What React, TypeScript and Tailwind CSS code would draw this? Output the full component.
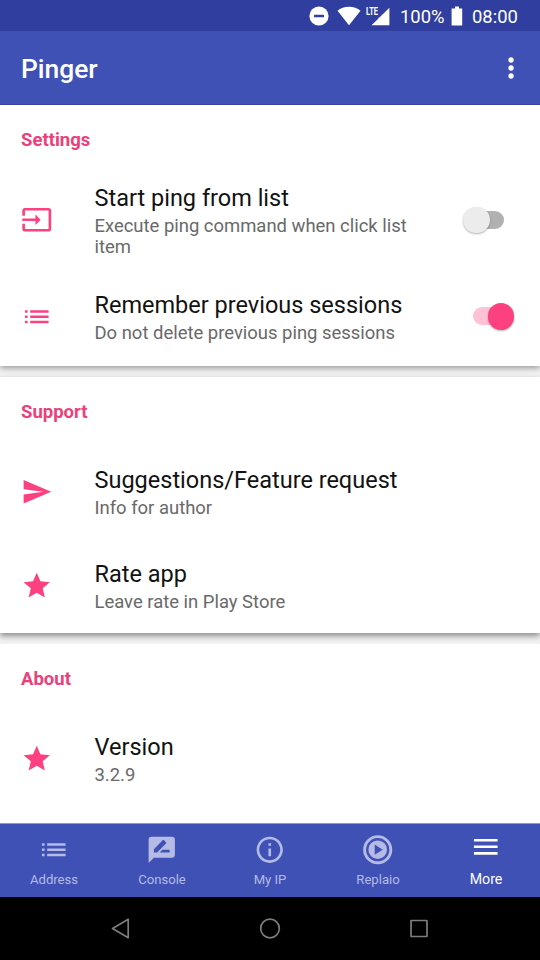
import type { ReactNode } from 'react';

const paths = {
  input:
    'M21 3.01H3c-1.1 0-2 .9-2 2V9h2V4.99h18v14.03H3V15H1v4.01c0 1.1.9 1.98 2 1.98h18c1.1 0 2-.88 2-1.98v-14c0-1.11-.9-2-2-2zM11 16l4-4-4-4v3H1v2h10v3z',
  list: 'M3 13h2v-2H3v2zm0 4h2v-2H3v2zm0-8h2V7H3v2zm4 4h14v-2H7v2zm0 4h14v-2H7v2zM7 7v2h14V7H7z',
  send: 'M2.01 21L23 12 2.01 3 2 10l15 2-15 2z',
  star: 'M12 17.27L18.18 21l-1.64-7.03L22 9.24l-7.19-.61L12 2 9.19 8.63 2 9.24l5.46 4.73L5.82 21z',
  review:
    'M20 2H4c-1.1 0-1.99.9-1.99 2L2 22l4-4h14c1.1 0 2-.9 2-2V4c0-1.1-.9-2-2-2zM6 14v-2.47l6.88-6.88c.2-.2.51-.2.71 0l1.77 1.77c.2.2.2.51 0 .71L8.47 14H6zm12 0h-7.5l2-2H18v2z',
  info: 'M11 7h2v2h-2zm0 4h2v6h-2zm1-9C6.48 2 2 6.48 2 12s4.48 10 10 10 10-4.48 10-10S17.52 2 12 2zm0 18c-4.41 0-8-3.59-8-8s3.59-8 8-8 8 3.59 8 8-3.59 8-8 8z',
  menu: 'M3 18h18v-2H3v2zm0-5h18v-2H3v2zm0-7v2h18V6H3z',
};

function Icon({ d, className = '' }: { d: string; className?: string }) {
  return (
    <svg viewBox="0 0 24 24" fill="currentColor" className={`size-[31.5px] shrink-0 ${className}`}>
      <path d={d} />
    </svg>
  );
}

function ReplaioIcon() {
  return (
    <svg viewBox="0 0 32 32" className="size-8 shrink-0">
      <circle cx="15.7" cy="15.7" r="13.1" fill="none" stroke="currentColor" strokeWidth="2.9" />
      <path
        fill="currentColor"
        fillRule="evenodd"
        d="M15.700 6.400a9.300 9.300 0 1 0 0 18.600a9.300 9.300 0 1 0 0-18.600zM12.700 10.600L20.700 15.700L12.700 20.800z"
      />
    </svg>
  );
}

function Switch({ on }: { on: boolean }) {
  return (
    <div className={`flex h-[18px] w-[37px] items-center rounded-full ${on ? 'mr-[30px] justify-end bg-[#ffc1d6]' : 'mr-9 bg-[#b1b1b1]'}`}>
      <div
        className={`size-[26.5px] shrink-0 rounded-full shadow-[0_1px_2px_rgba(0,0,0,0.3)] ${on ? '-mr-[4px] bg-[#fc4080]' : '-ml-[4px] bg-[#ececec]'}`}
      />
    </div>
  );
}

function Row({ icon, title, sub, height = 'h-[94.5px]', children }: { icon: string; title: string; sub: string; height?: string; children?: ReactNode }) {
  return (
    <div className={`flex items-center pl-[21px] ${height}`}>
      <Icon d={icon} className="text-[#fc4080]" />
      <div className="ml-[42px] w-[330px] pt-0.5">
        <div className="text-[23.5px] leading-7 whitespace-nowrap text-[#121212]">{title}</div>
        <div className="mt-1 text-[18.45px] leading-[21.5px] text-[#696969]">{sub}</div>
      </div>
      <div className="ml-auto">{children}</div>
    </div>
  );
}

function Section({ title, className = '', children }: { title: string; className?: string; children: ReactNode }) {
  return (
    <section className={`bg-white ${className}`}>
      <h2 className="h-[67px] pt-[25px] pl-[21px] text-[18.5px] leading-[21.5px] font-bold text-[#ec407a]">{title}</h2>
      {children}
    </section>
  );
}

function Tab({ label, children }: { label: string; children: ReactNode }) {
  return (
    <div className="flex flex-1 flex-col items-center pt-[10px] text-[#b5bbe4]">
      <div className="flex h-8 items-center">{children}</div>
      <span className="mt-[5px] text-[13.1px] leading-[18px]">{label}</span>
    </div>
  );
}

function StatusBar() {
  return (
    <div className="flex h-[31px] items-center justify-end bg-[#303f9f] pr-5 text-[18.4px] leading-[31px] text-white">
      <svg viewBox="0 0 20 20" className="mr-2 size-5">
        <circle cx="10" cy="10" r="9.6" fill="#fff" />
        <rect x="5" y="8.8" width="10" height="2.4" rx="0.5" fill="#303f9f" />
      </svg>
      <svg viewBox="0 0 24 20" className="mr-[5px] h-5 w-6" fill="#fff">
        <path d="M.5 4.8C3.5 2.3 7.6 .8 12 .8s8.500 1.500 11.500 4L12 19.200z" />
      </svg>
      <div className="relative mr-[10px] h-5 w-6">
        <svg viewBox="0 0 24 20" className="h-5 w-6" fill="#fff">
          <path d="M23.400 1.800V19.300H5.500L12.500 12.400V11.500H13.400L23.400 1.800z" />
        </svg>
        <span className="absolute top-0 left-0 origin-left scale-x-[0.68] text-[11px] leading-[12px] font-bold">LTE</span>
      </div>
      <span className="w-[45px] pt-px whitespace-nowrap">100%</span>
      <svg viewBox="0 0 12 20" className="mr-[9px] ml-1.5 h-5 w-3" fill="#fff">
        <path d="M4 .5h4v2h3.200v17H.6v-17H4z" />
      </svg>
      <span className="w-12 pt-px whitespace-nowrap">08:00</span>
    </div>
  );
}

export default function App() {
  return (
    <div className="flex h-[960px] w-[540px] flex-col overflow-hidden bg-[#f2f2f2] font-[Roboto,sans-serif]">
      <StatusBar />
      <header className="flex h-[74px] shrink-0 items-center justify-between border-b border-[#35439a] bg-[#3f51b5] pr-[26px] pl-[21px] text-white">
        <h1 className="pt-[5px] text-[26.4px] font-medium">Pinger</h1>
        <svg viewBox="0 0 6 22" className="h-[22px] w-1.5" fill="#fff">
          <circle cx="3" cy="3" r="2.7" />
          <circle cx="3" cy="11" r="2.7" />
          <circle cx="3" cy="19" r="2.7" />
        </svg>
      </header>
      <main className="flex h-[718px] shrink-0 flex-col gap-[11px] overflow-hidden">
        <Section title="Settings" className="h-[261px] shrink-0 shadow-[0_2px_6px_rgba(0,0,0,0.38)]">
          <Row icon={paths.input} title="Start ping from list" sub="Execute ping command when click list item" height="h-[96px]">
            <Switch on={false} />
          </Row>
          <Row icon={paths.list} title="Remember previous sessions" sub="Do not delete previous ping sessions" height="h-[96.5px]">
            <Switch on />
          </Row>
        </Section>
        <Section title="Support" className="h-64 shrink-0 shadow-[0_3px_6px_rgba(0,0,0,0.42)]">
          <Row icon={paths.send} title="Suggestions/Feature request" sub="Info for author" />
          <Row icon={paths.star} title="Rate app" sub="Leave rate in Play Store" />
        </Section>
        <Section title="About" className="relative flex-1">
          <Row icon={paths.star} title="Version" sub="3.2.9" />
        </Section>
      </main>
      <nav className="flex h-[74px] shrink-0 border-t border-[#8b95d0] bg-[#3f51b5]">
        <Tab label="Address"><Icon d={paths.list} /></Tab>
        <Tab label="Console"><Icon d={paths.review} /></Tab>
        <Tab label="My IP"><Icon d={paths.info} /></Tab>
        <Tab label="Replaio"><ReplaioIcon /></Tab>
        <div className="flex flex-1 flex-col items-center pt-[7px] text-white">
          <div className="flex h-8 items-center"><Icon d={paths.menu} /></div>
          <span className="mt-[7px] text-[14.2px] leading-[18px]">More</span>
        </div>
      </nav>
      <div className="flex flex-1 items-center justify-between bg-black px-[110px]">
        <svg viewBox="0 0 22 22" className="size-[22px]" fill="none" stroke="#7d7d7d" strokeWidth="1.7" strokeLinejoin="round">
          <path d="M18.200 1.300V19.700L2.500 10.500z" />
        </svg>
        <svg viewBox="0 0 22 22" className="size-[22px]" fill="none" stroke="#7d7d7d" strokeWidth="1.7">
          <circle cx="11" cy="10.5" r="9.3" />
        </svg>
        <svg viewBox="0 0 22 22" className="size-[22px]" fill="none" stroke="#7d7d7d" strokeWidth="1.7" strokeLinejoin="round">
          <rect x="3" y="2.5" width="16" height="16" rx="0.3" />
        </svg>
      </div>
    </div>
  );
}
